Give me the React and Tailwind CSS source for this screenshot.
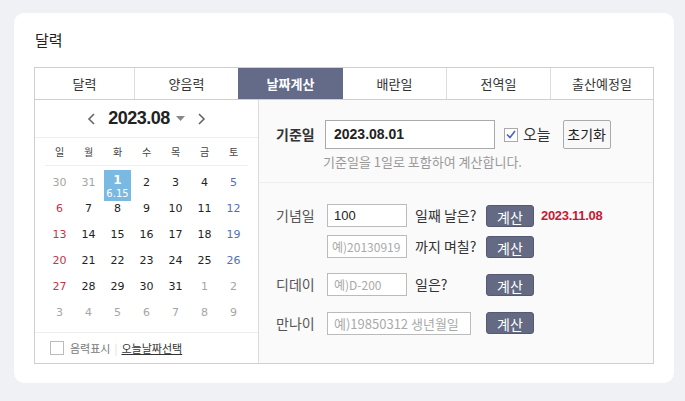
import React from "react";

const tabs = [
  { label: "달력", w: "w-[99px]" },
  { label: "양음력", w: "w-[104px]" },
  { label: "날짜계산", w: "w-[105px]" },
  { label: "배란일", w: "w-[103px]" },
  { label: "전역일", w: "w-[104px]" },
  { label: "출산예정일", w: "flex-1" },
];
const weekdays = ["일", "월", "화", "수", "목", "금", "토"];

const weeks = [
  [30, 31, 1, 2, 3, 4, 5],
  [6, 7, 8, 9, 10, 11, 12],
  [13, 14, 15, 16, 17, 18, 19],
  [20, 21, 22, 23, 24, 25, 26],
  [27, 28, 29, 30, 31, 1, 2],
  [3, 4, 5, 6, 7, 8, 9],
];

const font = { fontFamily: '"Noto Sans CJK KR", "Noto Sans", sans-serif' };

const CalcButton = () => (
  <button className="w-[48px] h-[22px] rounded-[3px] bg-[#646a84] text-white text-[14px] leading-[22px] border border-[#555a70]">
    계산
  </button>
);

const App = () => {
  const cellColor = (wi, di, d) => {
    const muted = (wi === 0 && d > 20) || (wi >= 4 && d < 10);
    if (muted) return "text-[#a5a5a5]";
    if (di === 0) return "text-[#c4334b]";
    if (di === 6) return "text-[#5470b5]";
    return "text-[#222]";
  };

  return (
    <div className="w-[685px] h-[401px] bg-[#f0f1f5] pt-[13px] pl-[14px]" style={font}>
      <div className="w-[660px] h-[370px] bg-white rounded-[10px] pt-[16px] px-[20px]">
        <h2 className="text-[15px] text-[#222] leading-[22px] ml-[1px]">달력</h2>

        <div className="mt-[16px] w-[620px] border border-[#cfcfcf]">
          {/* Tabs */}
          <div className="flex h-[32px] border-b border-[#cfcfcf]">
            {tabs.map((t, i) => (
              <div
                key={t.label}
                className={
                  t.w +
                  " flex items-center justify-center text-[13px] " +
                  (i === 2
                    ? "bg-[#646b88] text-white font-bold"
                    : "text-[#333] bg-white") +
                  (i > 0 && i !== 2 && i !== 3 ? " border-l border-[#dcdcdc]" : "")
                }
              >
                {t.label}
              </div>
            ))}
          </div>

          <div className="flex h-[263px]">
            {/* Calendar */}
            <div className="w-[224px] flex flex-col border-r border-[#dcdcdc]">
              <div className="h-[38px] flex items-center justify-center gap-[12px] border-b border-[#eeeeee]">
                <svg width="9" height="14" viewBox="0 0 9 14">
                  <path d="M7 2 L2 7 L7 12" fill="none" stroke="#666" strokeWidth="1.6" />
                </svg>
                <span className="flex items-center gap-[6px]">
                  <span className="text-[18px] font-bold text-[#222] tracking-[-0.5px]" style={{ fontFamily: '"Liberation Sans", Arial, sans-serif' }}>
                    2023.08
                  </span>
                  <svg width="9" height="6" viewBox="0 0 9 6">
                    <path d="M0 0 L9 0 L4.5 5 Z" fill="#888" />
                  </svg>
                </span>
                <svg width="9" height="14" viewBox="0 0 9 14">
                  <path d="M2 2 L7 7 L2 12" fill="none" stroke="#666" strokeWidth="1.6" />
                </svg>
              </div>

              <div className="px-[10px]">
                <div className="grid grid-cols-7 h-[28px] items-center border-b border-[#eeeeee]">
                  {weekdays.map((w) => (
                    <div key={w} className="text-center text-[10px] text-[#444]">
                      {w}
                    </div>
                  ))}
                </div>

                <div className="pt-[4px]">
                  {weeks.map((week, wi) => (
                    <div key={wi} className="grid grid-cols-7 h-[26px]">
                      {week.map((d, di) => {
                        if (wi === 0 && d === 1) {
                          return (
                            <div key={di} className="flex justify-center">
                              <div className="w-[27px] h-[31px] bg-[#7ab9e2] text-white flex flex-col items-center leading-none pt-[4px]" style={{ fontFamily: 'Tahoma, "DejaVu Sans", sans-serif' }}>
                                <span className="text-[12px] font-bold">1</span>
                                <span className="text-[10px] mt-[3px]">6.15</span>
                              </div>
                            </div>
                          );
                        }
                        return (
                          <div
                            key={di}
                            className={"text-center text-[11px] leading-[26px] " + cellColor(wi, di, d)}
                            style={{ fontFamily: '"DejaVu Sans", Verdana, sans-serif' }}
                          >
                            {d}
                          </div>
                        );
                      })}
                    </div>
                  ))}
                </div>
              </div>

              <div className="mt-auto border-t border-[#eeeeee] h-[31px] flex items-center px-[15px] text-[11px]">
                <span className="w-[14px] h-[14px] border border-[#bbb] bg-white mr-[6px]" />
                <span className="text-[#777]">음력표시</span>
                <span className="mx-[4px] text-[#ddd]">|</span>
                <span className="text-[#333] underline">오늘날짜선택</span>
              </div>
            </div>

            {/* Calculator */}
            <div className="flex-1 bg-[#fafafa]">
              <div className="h-[83px] border-b border-[#eeeeee] pt-[20px] pl-[17px]">
                <div className="flex items-center h-[29px]">
                  <span className="w-[49px] text-[14px] font-bold text-[#333]">기준일</span>
                  <div className="w-[170px] h-[29px] border border-[#aaa] bg-white flex items-center pl-[8px] text-[14px] font-bold text-[#222]" style={{ fontFamily: '"Liberation Sans", Arial, sans-serif' }}>
                    2023.08.01
                  </div>
                  <span className="ml-[9px] w-[14px] h-[14px] border border-[#aaa] bg-white flex items-center justify-center">
                    <svg width="10" height="9" viewBox="0 0 10 9">
                      <path d="M1 4.5 L4 7.5 L9 1" fill="none" stroke="#4a63c8" strokeWidth="1.6" />
                    </svg>
                  </span>
                  <span className="ml-[5px] text-[15px] text-[#333]">오늘</span>
                  <button className="ml-[12px] w-[48px] h-[29px] border border-[#aaa] rounded-[2px] bg-[#f8f8f8] text-[14px] text-[#222]">
                    초기화
                  </button>
                </div>
                <p className="mt-[3px] ml-[47px] text-[13px] text-[#999]">기준일을 1일로 포함하여 계산합니다.</p>
              </div>

              <div className="pl-[17px] pt-[21px] flex flex-col text-[14px] text-[#333]">
                <div className="flex items-center h-[23px]">
                  <span className="w-[51px] text-[#555]">기념일</span>
                  <div className="w-[80px] h-[23px] border border-[#bbb] bg-white flex items-center pl-[6px] text-[13px] text-[#222]" style={{ fontFamily: '"Liberation Sans", Arial, sans-serif' }}>
                    100
                  </div>
                  <span className="ml-[8px] w-[71px]">일째 날은?</span>
                  <CalcButton />
                  <span className="ml-[7px] text-[13px] font-bold text-[#c41a35] tracking-[-0.3px]" style={{ fontFamily: '"Liberation Sans", Arial, sans-serif' }}>
                    2023.11.08
                  </span>
                </div>
                <div className="flex items-center h-[23px] mt-[8px]">
                  <span className="w-[51px]" />
                  <div className="w-[80px] h-[23px] border border-[#bbb] bg-white flex items-center pl-[4px] text-[12px] text-[#aaa]">
                    예)20130919
                  </div>
                  <span className="ml-[8px] w-[71px]">까지 며칠?</span>
                  <CalcButton />
                </div>
                <div className="flex items-center h-[23px] mt-[15px]">
                  <span className="w-[51px] text-[#555]">디데이</span>
                  <div className="w-[80px] h-[23px] border border-[#bbb] bg-white flex items-center pl-[6px] text-[12px] text-[#aaa]">
                    예)D-200
                  </div>
                  <span className="ml-[8px] w-[71px]">일은?</span>
                  <CalcButton />
                </div>
                <div className="flex items-center h-[23px] mt-[16px]">
                  <span className="w-[51px] text-[#555]">만나이</span>
                  <div className="w-[144px] h-[23px] border border-[#bbb] bg-white flex items-center pl-[6px] text-[13px] text-[#aaa] whitespace-nowrap overflow-hidden">
                    예)19850312 생년월일
                  </div>
                  <span className="ml-[15px]">
                    <CalcButton />
                  </span>
                </div>
              </div>
            </div>
          </div>
        </div>
      </div>
    </div>
  );
};

export default App;
